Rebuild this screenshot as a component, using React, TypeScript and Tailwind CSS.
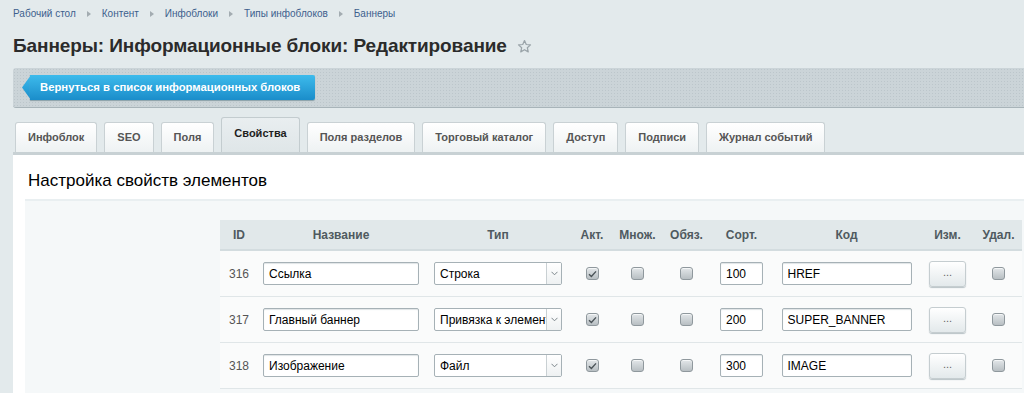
import React from "react";

const crumbs = ["Рабочий стол", "Контент", "Инфоблоки", "Типы инфоблоков", "Баннеры"];
const tabs = [
  "Инфоблок",
  "SEO",
  "Поля",
  "Свойства",
  "Поля разделов",
  "Торговый каталог",
  "Доступ",
  "Подписи",
  "Журнал событий",
];

const rows = [
  { id: "316", name: "Ссылка", type: "Строка", sort: "100", code: "HREF" },
  { id: "317", name: "Главный баннер", type: "Привязка к элементам", sort: "200", code: "SUPER_BANNER" },
  { id: "318", name: "Изображение", type: "Файл", sort: "300", code: "IMAGE" },
];

const cols = "grid grid-cols-[38px_166px_148px_40px_51px_47px_63px_147px_55px_47px]";

const Check: React.FC<{ checked?: boolean }> = ({ checked }) => (
  <span className="flex h-[13px] w-[13px] items-center justify-center rounded-[3px] border border-[#8f989d] bg-gradient-to-b from-[#e3e7e9] to-[#b8bfc3] shadow-[inset_0_1px_0_#f4f6f7]">
    {checked && (
      <svg width="9" height="8" viewBox="0 0 9 8">
        <path d="M1 4.2 L3.4 6.4 L8 1.4" fill="none" stroke="#4a5257" strokeWidth="1.4" />
      </svg>
    )}
  </span>
);

const TextInput: React.FC<{ value: string; w: string }> = ({ value, w }) => (
  <div
    className={`${w} flex h-[23px] items-center overflow-hidden whitespace-nowrap rounded-[2px] border border-[#a6b1b6] bg-white pl-[5px] text-[12px] text-black shadow-[inset_0_1px_1px_#dfe4e6]`}
  >
    {value}
  </div>
);

const Select: React.FC<{ value: string }> = ({ value }) => (
  <div className="flex h-[23px] w-[128px] items-center overflow-hidden rounded-[2px] border border-[#a6b1b6] bg-white text-[12px] text-black">
    <span className="flex-1 overflow-hidden whitespace-nowrap pl-[5px]">{value}</span>
    <span className="flex h-full w-[15px] shrink-0 items-center justify-center border-l border-[#c9d0d3] bg-gradient-to-b from-white to-[#eef1f2]">
      <svg width="7" height="5" viewBox="0 0 7 5">
        <path d="M0.5 0.8 L3.5 3.8 L6.5 0.8" fill="none" stroke="#7c868b" strokeWidth="1" />
      </svg>
    </span>
  </div>
);

const App: React.FC = () => {
  return (
    <div className="h-[393px] w-[1024px] overflow-hidden bg-[#e3eaec] font-['Liberation_Sans',Arial,sans-serif]">
      {/* Breadcrumbs */}
      <div className="flex h-[27px] items-center pl-[13px] text-[10px] text-[#3d5f8c]">
        {crumbs.map((c, i) => (
          <React.Fragment key={c}>
            {i > 0 && (
              <svg className="mx-[11px]" width="4" height="6" viewBox="0 0 4 6">
                <path d="M0 0 L4 3 L0 6 Z" fill="#a3acb1" />
              </svg>
            )}
            <span>{c}</span>
          </React.Fragment>
        ))}
      </div>

      {/* Title */}
      <div className="flex h-[38px] items-center pl-[13px]">
        <h1 className="text-[19px] font-bold tracking-[-0.1px] text-[#2b2b2b]">
          Баннеры: Информационные блоки: Редактирование
        </h1>
        <svg className="ml-[10px] mt-[1px]" width="15" height="15" viewBox="0 0 24 24">
          <path
            d="M12 2.5 L14.8 8.8 L21.6 9.4 L16.5 13.9 L18 20.6 L12 17.1 L6 20.6 L7.5 13.9 L2.4 9.4 L9.2 8.8 Z"
            fill="none"
            stroke="#9aa4a9"
            strokeWidth="2"
            strokeLinejoin="round"
          />
        </svg>
      </div>

      {/* Toolbar */}
      <div className="ml-[13px] mt-[3px] flex h-[40px] items-center rounded-l-[3px] border-b border-[#a8b4b9] bg-[#cbd4d8] bg-[radial-gradient(#bcc6cb_0.7px,transparent_0.8px)] bg-[length:3px_3px] pl-[9px]">
        <div className="flex h-[25px] items-center">
          <svg width="9" height="25" viewBox="0 0 9 25" className="-mr-px">
            <defs>
              <linearGradient id="btnGrad" x1="0" y1="0" x2="0" y2="1">
                <stop offset="0" stopColor="#3dbbec" />
                <stop offset="1" stopColor="#1a8dca" />
              </linearGradient>
            </defs>
            <path d="M9 0 L0 12.5 L9 25 Z" fill="url(#btnGrad)" />
          </svg>
          <div className="flex h-[25px] items-center rounded-r-[2px] bg-gradient-to-b from-[#3dbbec] to-[#1a8dca] pl-[10px] pr-[15px] text-[11.3px] font-bold text-white shadow-[0_1px_1px_#8aa0a9]">
            Вернуться в список информационных блоков
          </div>
        </div>
      </div>

      {/* Tabs */}
      <div className="ml-[15px] mt-[9px] flex h-[35px] items-end gap-[7px]">
        {tabs.map((t) =>
          t === "Свойства" ? (
            <div
              key={t}
              className="flex h-[35px] items-center rounded-t-[3px] border border-b-0 border-[#c3cccf] bg-gradient-to-b from-[#e9eef0] to-[#dfe6e8] px-[12px] pb-[3px] text-[11px] font-bold text-[#1e1e1e]"
            >
              {t}
            </div>
          ) : (
            <div
              key={t}
              className="flex h-[30px] items-center rounded-t-[3px] border border-b-0 border-[#c9d1d4] bg-gradient-to-b from-white to-[#eef2f3] px-[12px] text-[11px] font-bold text-[#555]"
            >
              {t}
            </div>
          )
        )}
      </div>

      {/* Panel */}
      <div className="ml-[13px] border-t-[3px] border-[#c8d1d4] bg-white">
        <div className="h-[44px] pl-[15px] pt-[16px] text-[17px] leading-[20px] text-black">
          Настройка свойств элементов
        </div>
        <div className="ml-[12px] h-[200px] border-t-2 border-[#e9eff1] bg-[#f5f8f9] pl-[195px] pt-[19px]">
          <div className="w-[802px]">
            <div className={`${cols} h-[31px] items-center border-b-2 border-[#d3dcdf] bg-[#e1e8ea] text-center text-[12px] font-bold text-[#4f5a60]`}>
              <span>ID</span>
              <span>Название</span>
              <span>Тип</span>
              <span>Акт.</span>
              <span>Множ.</span>
              <span>Обяз.</span>
              <span>Сорт.</span>
              <span>Код</span>
              <span>Изм.</span>
              <span>Удал.</span>
            </div>
            {rows.map((r) => (
              <div
                key={r.id}
                className={`${cols} h-[46px] items-center border-b border-[#e0e6e8] bg-[#fafbfb] text-[12px]`}
              >
                <span className="text-center text-[#555]">{r.id}</span>
                <div className="flex justify-center">
                  <TextInput value={r.name} w="w-[156px]" />
                </div>
                <div className="flex justify-center">
                  <Select value={r.type} />
                </div>
                <div className="flex justify-center">
                  <Check checked />
                </div>
                <div className="flex justify-center">
                  <Check />
                </div>
                <div className="flex justify-center">
                  <Check />
                </div>
                <div className="flex justify-center">
                  <TextInput value={r.sort} w="w-[43px]" />
                </div>
                <div className="flex justify-center">
                  <TextInput value={r.code} w="w-[130px]" />
                </div>
                <div className="flex justify-center">
                  <div className="flex h-[26px] w-[37px] items-center justify-center rounded-[3px] border border-[#c5cdd0] bg-gradient-to-b from-white to-[#e3e9eb] pb-[3px] text-[11px] text-[#666] shadow-[0_1px_1px_#b8c2c6]">
                    ...
                  </div>
                </div>
                <div className="flex justify-center">
                  <Check />
                </div>
              </div>
            ))}
          </div>
        </div>
      </div>
    </div>
  );
};

export default App;
